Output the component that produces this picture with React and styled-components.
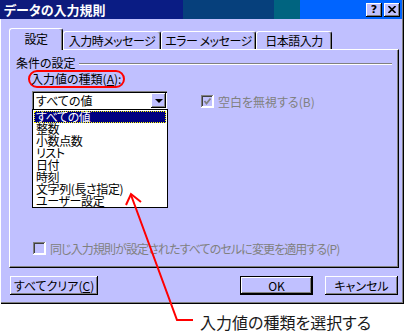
import React from "react";
import styled, { createGlobalStyle, css } from "styled-components";

const GlobalStyle = createGlobalStyle`
  body {
    margin: 0;
    background: #fff;
  }
  * {
    box-sizing: border-box;
  }
`;

const FONT = `"Noto Sans CJK JP", "Noto Sans", sans-serif`;
const FACE = "#c0c0ff";
const SHADOW = "#808080";

const raised = css`
  background: ${FACE};
  box-shadow: inset -1px -1px #000, inset 1px 1px #fff, inset -2px -2px ${SHADOW};
`;

const Page = styled.div`
  position: relative;
  width: 408px;
  height: 336px;
  background: #fff;
  font-family: ${FONT};
  font-size: 12px;
  font-feature-settings: "palt";
  color: #000;
  overflow: hidden;
`;

const Dialog = styled.div`
  width: 404px;
  height: 304px;
  background: ${FACE};
  box-shadow: inset 1px 0 #fff, inset -1px -1px #000, inset -2px -2px ${SHADOW};
  display: flex;
  flex-direction: column;
`;

const TitleBar = styled.div`
  height: 19px;
  margin-right: 2px;
  display: flex;
  align-items: center;
  padding: 0 2px 0 4px;
  background: linear-gradient(
    to right,
    #0e1a7c 0,
    #0e1a7c 93px,
    #0a1c84 93px,
    #0a1c84 183px,
    #06407c 183px,
    #06407c 274px,
    #006480 274px,
    #006480 300px,
    #0064ff 300px
  );
  color: #fff;
  font-weight: bold;
  font-size: 13px;
`;

const TitleText = styled.div`
  flex: 1;
  line-height: 19px;
`;

const CaptionButton = styled.div`
  ${raised};
  width: 16px;
  height: 14px;
  margin-left: 2px;
  display: flex;
  align-items: center;
  justify-content: center;
  color: #000;
  font-family: "DejaVu Sans", sans-serif;
  font-size: 11px;
  font-weight: bold;
  line-height: 14px;
`;

const Body = styled.div`
  padding: 9px 5px 0 9px;
`;

const TabRow = styled.div`
  display: flex;
  align-items: flex-end;
  height: 21px;
  position: relative;
  z-index: 1;
`;

const Tab = styled.div`
  width: ${(p) => p.$w}px;
  height: ${(p) => (p.$active ? 22 : 18)}px;
  margin-bottom: ${(p) => (p.$active ? -1 : 0)}px;
  background: ${FACE};
  border-top: 1px solid #fff;
  border-left: 1px solid #fff;
  border-right: 1px solid #000;
  border-radius: 3px 3px 0 0;
  box-shadow: inset -1px 0 ${SHADOW};
  display: flex;
  align-items: center;
  justify-content: center;
  padding-bottom: ${(p) => (p.$active ? 2 : 0)}px;
  white-space: nowrap;
  line-height: 14px;
  letter-spacing: -0.5px;
`;

const Panel = styled.div`
  width: 390px;
  height: 219px;
  border-top: 1px solid #fff;
  border-left: 1px solid #fff;
  border-right: 1px solid #000;
  border-bottom: 1px solid #000;
  box-shadow: inset -1px -1px ${SHADOW};
  padding: 6px 0 0 6px;
`;

const GroupHeader = styled.div`
  display: flex;
  align-items: center;
  height: 14px;
  line-height: 14px;
`;

const GroupLine = styled.div`
  flex: 1;
  height: 2px;
  margin: 1px 6px 0 3px;
  border-top: 1px solid ${SHADOW};
  border-bottom: 1px solid #fff;
`;

const RingedLabel = styled.div`
  display: inline-block;
  margin-left: 12px;
  height: 18px;
  border: 2px solid #ff0000;
  border-radius: 9px;
  padding: 0 2px 0 1px;
  line-height: 14px;
  white-space: nowrap;
`;

const Key = styled.span`
  text-decoration: underline;
`;

const Row = styled.div`
  display: flex;
  margin-top: 3px;
  padding-left: 16px;
`;

const LeftCol = styled.div`
  width: 136px;
`;

const Combo = styled.div`
  width: 135px;
  height: 18px;
  display: flex;
  align-items: stretch;
  background: #fff;
  padding: 2px 1px 1px 2px;
  box-shadow: inset 1px 1px ${SHADOW}, inset 2px 2px #000, inset -1px -1px #fff;
`;

const ComboText = styled.div`
  flex: 1;
  padding-left: 2px;
  line-height: 15px;
`;

const ComboButton = styled.div`
  ${raised};
  width: 15px;
  display: flex;
  align-items: center;
  justify-content: center;

  &::after {
    content: "";
    border-left: 4px solid transparent;
    border-right: 4px solid transparent;
    border-top: 4px solid #000;
  }
`;

const DropList = styled.div`
  width: 136px;
  height: 99px;
  border: 1px solid #000;
  background: #fff;
  padding: 1px 1px 0 1px;
`;

const ListItem = styled.div`
  height: 12px;
  line-height: 12px;
  padding-left: 2px;
  white-space: nowrap;
  letter-spacing: -0.4px;
  ${(p) =>
    p.$selected &&
    css`
      background: #000080;
      color: #fff;
      outline: 1px dotted #ffff00;
      outline-offset: -1px;
    `}
`;

const RightCol = styled.div`
  margin-left: 33px;
  margin-top: 4px;
`;

const CheckRow = styled.div`
  display: flex;
  align-items: center;
  height: 13px;
  margin-top: ${(p) => p.$top || 0}px;
  margin-left: ${(p) => p.$left || 0}px;
  gap: 4px;
`;

const CheckLabel = styled.span`
  color: #808080;
  line-height: 13px;
  white-space: nowrap;
  letter-spacing: ${(p) => (p.$tight ? -0.9 : 0)}px;
`;

const Footer = styled.div`
  display: flex;
  padding: 8px 6px 0 10px;
`;

const Spacer = styled.div`
  flex: 1;
`;

const Button = styled.div`
  ${raised};
  width: ${(p) => p.$w}px;
  height: 19px;
  margin-left: ${(p) => p.$gap || 0}px;
  display: flex;
  align-items: center;
  justify-content: center;
  line-height: 15px;
  white-space: nowrap;
  ${(p) =>
    p.$default &&
    css`
      border: 1px solid #000;
    `}
`;

const Annotation = styled.div`
  height: 32px;
  display: flex;
  align-items: center;
  padding: 3px 0 0 200px;
  font-size: 16px;
  color: #1a1a1a;
  white-space: nowrap;
`;

const Overlay = styled.svg`
  position: absolute;
  left: 0;
  top: 0;
  pointer-events: none;
`;

const CheckBox = ({ checked }) => (
  <svg width="13" height="13" viewBox="0 0 13 13">
    <rect x="0" y="0" width="13" height="13" fill="#fff" />
    <rect x="0" y="0" width="12" height="12" fill={SHADOW} />
    <rect x="1" y="1" width="11" height="11" fill="#fff" />
    <rect x="1" y="1" width="10" height="10" fill="#404040" />
    <rect x="2" y="2" width="9" height="9" fill={FACE} />
    {checked && (
      <path d="M3.5 6 L5.5 8.5 L9.5 3.5" stroke="#808080" strokeWidth="1.8" fill="none" />
    )}
  </svg>
);

const items = ["すべての値", "整数", "小数点数", "リスト", "日付", "時刻", "文字列(長さ指定)", "ユーザー設定"];

const tabs = [
  { label: "設定", w: 54 },
  { label: "入力時メッセージ", w: 98 },
  { label: "エラー メッセージ", w: 95 },
  { label: "日本語入力", w: 76 },
];

export default function App() {
  return (
    <Page>
      <GlobalStyle />
      <Dialog>
        <TitleBar>
          <TitleText>データの入力規則</TitleText>
          <CaptionButton>?</CaptionButton>
          <CaptionButton>
            <svg width="8" height="7" viewBox="0 0 8 7">
              <path d="M0.5 0 L7.5 7 M7.5 0 L0.5 7" stroke="#000" strokeWidth="1.6" />
            </svg>
          </CaptionButton>
        </TitleBar>
        <Body>
          <TabRow>
            {tabs.map((t, i) => (
              <Tab key={t.label} $w={t.w} $active={i === 0}>
                {t.label}
              </Tab>
            ))}
          </TabRow>
          <Panel>
            <GroupHeader>
              条件の設定
              <GroupLine />
            </GroupHeader>
            <RingedLabel>
              入力値の種類(<Key>A</Key>):
            </RingedLabel>
            <Row>
              <LeftCol>
                <Combo>
                  <ComboText>すべての値</ComboText>
                  <ComboButton />
                </Combo>
                <DropList>
                  {items.map((it, i) => (
                    <ListItem key={it} $selected={i === 0}>
                      {it}
                    </ListItem>
                  ))}
                </DropList>
              </LeftCol>
              <RightCol>
                <CheckRow>
                  <CheckBox checked />
                  <CheckLabel>空白を無視する(B)</CheckLabel>
                </CheckRow>
              </RightCol>
            </Row>
            <CheckRow $top={34} $left={17}>
              <CheckBox />
              <CheckLabel $tight>同じ入力規則が設定されたすべてのセルに変更を適用する(P)</CheckLabel>
            </CheckRow>
          </Panel>
        </Body>
        <Footer>
          <Button $w={88}>
            すべてクリア(<Key>C</Key>)
          </Button>
          <Spacer />
          <Button $w={73} $default>
            OK
          </Button>
          <Button $w={73} $gap={12}>
            キャンセル
          </Button>
        </Footer>
      </Dialog>
      <Annotation>入力値の種類を選択する</Annotation>
      <Overlay width="408" height="336" viewBox="0 0 408 336">
        <polyline
          points="131,195 177,320 193,320"
          stroke="#ff0000"
          strokeWidth="2"
          fill="none"
        />
        <polyline
          points="126,205 131,194 141,202"
          stroke="#ff0000"
          strokeWidth="2"
          fill="none"
        />
      </Overlay>
    </Page>
  );
}
